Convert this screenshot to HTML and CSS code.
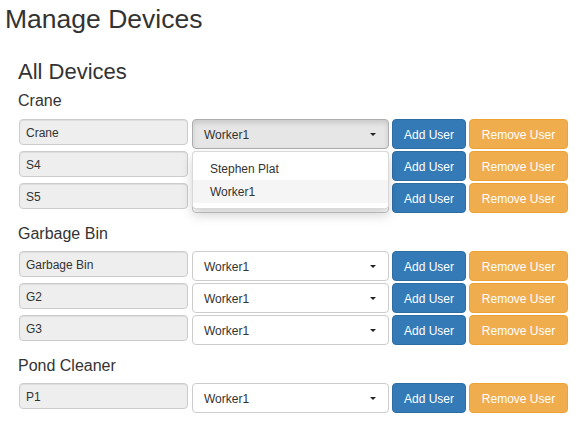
FILE: index.html
```html
<!DOCTYPE html>
<html lang="en">
<head>
<meta charset="utf-8">
<title>Manage Devices</title>
<link rel="stylesheet" href="styles.css">
</head>
<body>
<div class="page">
  <h1 class="title">Manage Devices</h1>
  <section class="devices">
    <h2 class="devices-title">All Devices</h2>

    <div class="group">
      <h4 class="group-label">Crane</h4>
      <div class="rows">
        <div class="row">
          <div class="device-name">Crane</div>
          <div class="picker">
            <button class="picker-toggle active"><span>Worker1</span><span class="caret"></span></button>
            <ul class="picker-menu">
              <li class="picker-item">Stephen Plat</li>
              <li class="picker-item hover">Worker1</li>
            </ul>
          </div>
          <button class="btn btn-add">Add User</button>
          <button class="btn btn-remove">Remove User</button>
        </div>
        <div class="row">
          <div class="device-name">S4</div>
          <div class="picker covered">
            <button class="picker-toggle"><span>Worker1</span><span class="caret"></span></button>
          </div>
          <button class="btn btn-add">Add User</button>
          <button class="btn btn-remove">Remove User</button>
        </div>
        <div class="row">
          <div class="device-name">S5</div>
          <div class="picker covered">
            <button class="picker-toggle"><span>Worker1</span><span class="caret"></span></button>
          </div>
          <button class="btn btn-add">Add User</button>
          <button class="btn btn-remove">Remove User</button>
        </div>
      </div>
    </div>

    <div class="group">
      <h4 class="group-label">Garbage Bin</h4>
      <div class="rows">
        <div class="row">
          <div class="device-name">Garbage Bin</div>
          <div class="picker">
            <button class="picker-toggle"><span>Worker1</span><span class="caret"></span></button>
          </div>
          <button class="btn btn-add">Add User</button>
          <button class="btn btn-remove">Remove User</button>
        </div>
        <div class="row">
          <div class="device-name">G2</div>
          <div class="picker">
            <button class="picker-toggle"><span>Worker1</span><span class="caret"></span></button>
          </div>
          <button class="btn btn-add">Add User</button>
          <button class="btn btn-remove">Remove User</button>
        </div>
        <div class="row">
          <div class="device-name">G3</div>
          <div class="picker">
            <button class="picker-toggle"><span>Worker1</span><span class="caret"></span></button>
          </div>
          <button class="btn btn-add">Add User</button>
          <button class="btn btn-remove">Remove User</button>
        </div>
      </div>
    </div>

    <div class="group">
      <h4 class="group-label">Pond Cleaner</h4>
      <div class="rows">
        <div class="row">
          <div class="device-name">P1</div>
          <div class="picker">
            <button class="picker-toggle"><span>Worker1</span><span class="caret"></span></button>
          </div>
          <button class="btn btn-add">Add User</button>
          <button class="btn btn-remove">Remove User</button>
        </div>
      </div>
    </div>
  </section>
</div>
</body>
</html>
```

FILE: styles.css
```css
html, body {
  margin: 0;
  padding: 0;
  background: #fff;
}

body {
  font-family: "Liberation Sans", Arial, Helvetica, sans-serif;
  color: #333;
}

.title {
  margin: 4px 0 0 5px;
  font-size: 26.5px;
  line-height: 30px;
  font-weight: 400;
}

.devices {
  display: flex;
  flex-direction: column;
  padding-left: 18px;
}

.devices-title {
  margin: 25px 0 0;
  font-size: 22px;
  line-height: 26px;
  font-weight: 400;
}

.group {
  margin-top: 7px;
}

.group + .group {
  margin-top: 12px;
}

.group-label {
  margin: 0 0 9px;
  font-size: 16px;
  line-height: 18px;
  font-weight: 400;
}

.group + .group .group-label {
  margin-bottom: 8px;
}

.rows {
  display: flex;
  flex-direction: column;
  gap: 2px;
}

.row {
  display: flex;
  align-items: flex-start;
  gap: 3px;
  padding-left: 1px;
}

.device-name {
  box-sizing: border-box;
  width: 169px;
  height: 26px;
  margin-right: 1px;
  padding: 3px 6px 0;
  border: 1px solid #ccc;
  border-radius: 4px;
  background: #eee;
  box-shadow: inset 0 1px 1px rgba(0, 0, 0, 0.075);
  font-size: 12px;
  line-height: 21px;
  white-space: nowrap;
}

.picker {
  position: relative;
  width: 197px;
  height: 30px;
}

.picker-toggle {
  box-sizing: border-box;
  display: flex;
  align-items: center;
  justify-content: space-between;
  width: 100%;
  height: 30px;
  margin: 0;
  padding: 3px 12px 0 11px;
  border: 1px solid #ccc;
  border-radius: 4px;
  background: #fff;
  color: #333;
  font-family: inherit;
  font-size: 12px;
  line-height: 25px;
  text-align: left;
}

/* pickers hidden underneath the open menu: their label is not visible */
.picker.covered .picker-toggle span:first-child {
  visibility: hidden;
}

.picker-toggle.active {
  background: #e6e6e6;
  border-color: #adadad;
  box-shadow: inset 0 3px 5px rgba(0, 0, 0, 0.125);
}

.caret {
  width: 0;
  height: 0;
  margin-bottom: 3px;
  border-top: 3px solid #222;
  border-left: 3px solid transparent;
  border-right: 3px solid transparent;
}

.picker-menu {
  position: absolute;
  top: 32px;
  left: 0;
  z-index: 10;
  box-sizing: border-box;
  width: 100%;
  margin: 0;
  padding: 5px 0;
  list-style: none;
  background: #fff;
  border: 1px solid rgba(0, 0, 0, 0.15);
  border-radius: 4px;
  box-shadow: 0 6px 12px rgba(0, 0, 0, 0.175);
}

.picker-item {
  padding: 2px 17px 0;
  height: 23px;
  box-sizing: border-box;
  font-size: 12px;
  line-height: 21px;
  color: #333;
  white-space: nowrap;
}

.picker-item.hover {
  background: #f5f5f5;
}

.btn {
  box-sizing: border-box;
  height: 30px;
  margin: 0;
  padding: 3px 0 0;
  border: 1px solid transparent;
  border-radius: 4px;
  color: #fff;
  font-family: inherit;
  font-size: 12px;
  line-height: 25px;
  text-align: center;
  white-space: nowrap;
}

.btn-add {
  width: 74px;
  background: #337ab7;
  border-color: #2e6da4;
}

.btn-remove {
  width: 99px;
  background: #f0ad4e;
  border-color: #eea236;
}
```
